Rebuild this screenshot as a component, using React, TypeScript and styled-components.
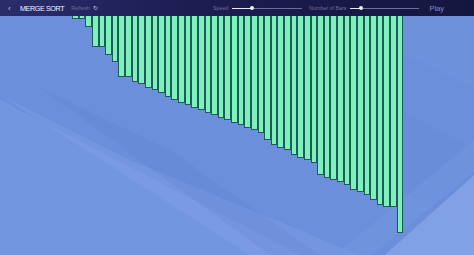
import React from 'react'
import styled, { createGlobalStyle } from 'styled-components'

const GlobalStyle = createGlobalStyle`
  html, body {
    margin: 0;
    padding: 0;
    height: 100%;
    overflow: hidden;
  }
  #root {
    height: 100%;
  }
`

const Page = styled.div`
  width: 474px;
  height: 255px;
  display: flex;
  flex-direction: column;
  font-family: 'Liberation Sans', Arial, sans-serif;
  background: #6b8fda;
  position: relative;
  overflow: hidden;
`

const Backdrop = styled.svg`
  position: absolute;
  left: 0;
  top: 0;
  width: 474px;
  height: 255px;
`

const Header = styled.div`
  position: relative;
  z-index: 2;
  height: 16px;
  flex: 0 0 16px;
  display: flex;
  align-items: center;
  background: linear-gradient(90deg, #2b2d6b 0%, #1d1d52 40%, #15163f 100%);
  color: #fff;
  padding: 0 0 0 8px;
`

const Back = styled.span`
  font-size: 8px;
  color: #c8c8e0;
  width: 12px;
`

const Title = styled.span`
  font-size: 7.2px;
  letter-spacing: -0.4px;
  color: #f4f4ff;
  margin-right: 7px;
`

const Small = styled.span`
  font-size: 5.3px;
  color: #6d6f9a;
`

const RefreshIcon = styled.span`
  font-size: 5.5px;
  color: #c0c2e0;
  margin-left: 3px;
`

const Spacer = styled.div`
  flex: 1;
`

const Slider = styled.div<{ $w: number; $pos: number; $mr: number }>`
  position: relative;
  width: ${({ $w }) => $w}px;
  height: 1px;
  margin: 0 ${({ $mr }) => $mr}px 0 4px;
  background: linear-gradient(
    90deg,
    #e8e8f8 0,
    #e8e8f8 ${({ $pos }) => $pos}px,
    #6d6f9a ${({ $pos }) => $pos}px
  );

  &::after {
    content: '';
    position: absolute;
    left: ${({ $pos }) => $pos - 2}px;
    top: -1.5px;
    width: 4px;
    height: 4px;
    border-radius: 50%;
    background: #f2f2ff;
  }
`

const Play = styled.span`
  font-size: 7.5px;
  color: #8a8cb2;
  margin: 0 30px 0 0;
`

const Stage = styled.div`
  position: relative;
  z-index: 1;
  flex: 1;
  display: flex;
  justify-content: center;
  align-items: flex-start;
`

const Bars = styled.div`
  display: flex;
  align-items: flex-start;
  width: 332px;
  margin-left: 2px;
`

const Bar = styled.div`
  flex: 0 0 6.64px;
  box-sizing: border-box;
  background: #7df0bc;
  border: 1px solid #1d5b59;
  border-top: none;
`

const heights = [
  3, 3, 11, 31, 31, 39, 46, 61, 61, 66, 68, 72, 74, 77, 81, 84, 87, 89, 92, 94, 97, 99, 102, 104, 107, 109,
  112, 114, 117, 124, 129, 132, 134, 139, 142, 144, 147, 159, 162, 164, 166, 169, 174, 176, 179, 184, 189,
  191, 191, 217,
]

export default function App() {
  return (
    <>
      <GlobalStyle />
      <Page>
        <Backdrop viewBox="0 0 474 255">
          <polygon points="0,100 0,255 300,255" fill="#7e9fe6" opacity="0.45" />
          <polygon points="0,95 130,160 360,255 250,255" fill="#8eaaec" opacity="0.25" />
          <polygon points="40,88 170,150 320,255 270,255" fill="#6286d3" opacity="0.3" />
          <polygon points="100,16 220,16 474,150 474,230 330,150" fill="#6286d3" opacity="0.25" />
          <polygon points="474,175 474,255 385,255" fill="#87a5ea" opacity="0.8" />
          <polygon points="474,140 474,172 372,255 335,255" fill="#7698e1" opacity="0.5" />
          <polygon points="330,16 474,16 474,90" fill="#7294dd" opacity="0.4" />
        </Backdrop>
        <Header>
          <Back>‹</Back>
          <Title>MERGE SORT</Title>
          <Small>Refresh</Small>
          <RefreshIcon>↻</RefreshIcon>
          <Spacer />
          <Small>Speed</Small>
          <Slider $w={70} $pos={20} $mr={7} />
          <Small>Number of Bars</Small>
          <Slider $w={69} $pos={11} $mr={10} />
          <Play>Play</Play>
        </Header>
        <Stage>
          <Bars>
            {heights.map((h, i) => (
              <Bar key={i} style={{ height: h }} />
            ))}
          </Bars>
        </Stage>
      </Page>
    </>
  )
}
